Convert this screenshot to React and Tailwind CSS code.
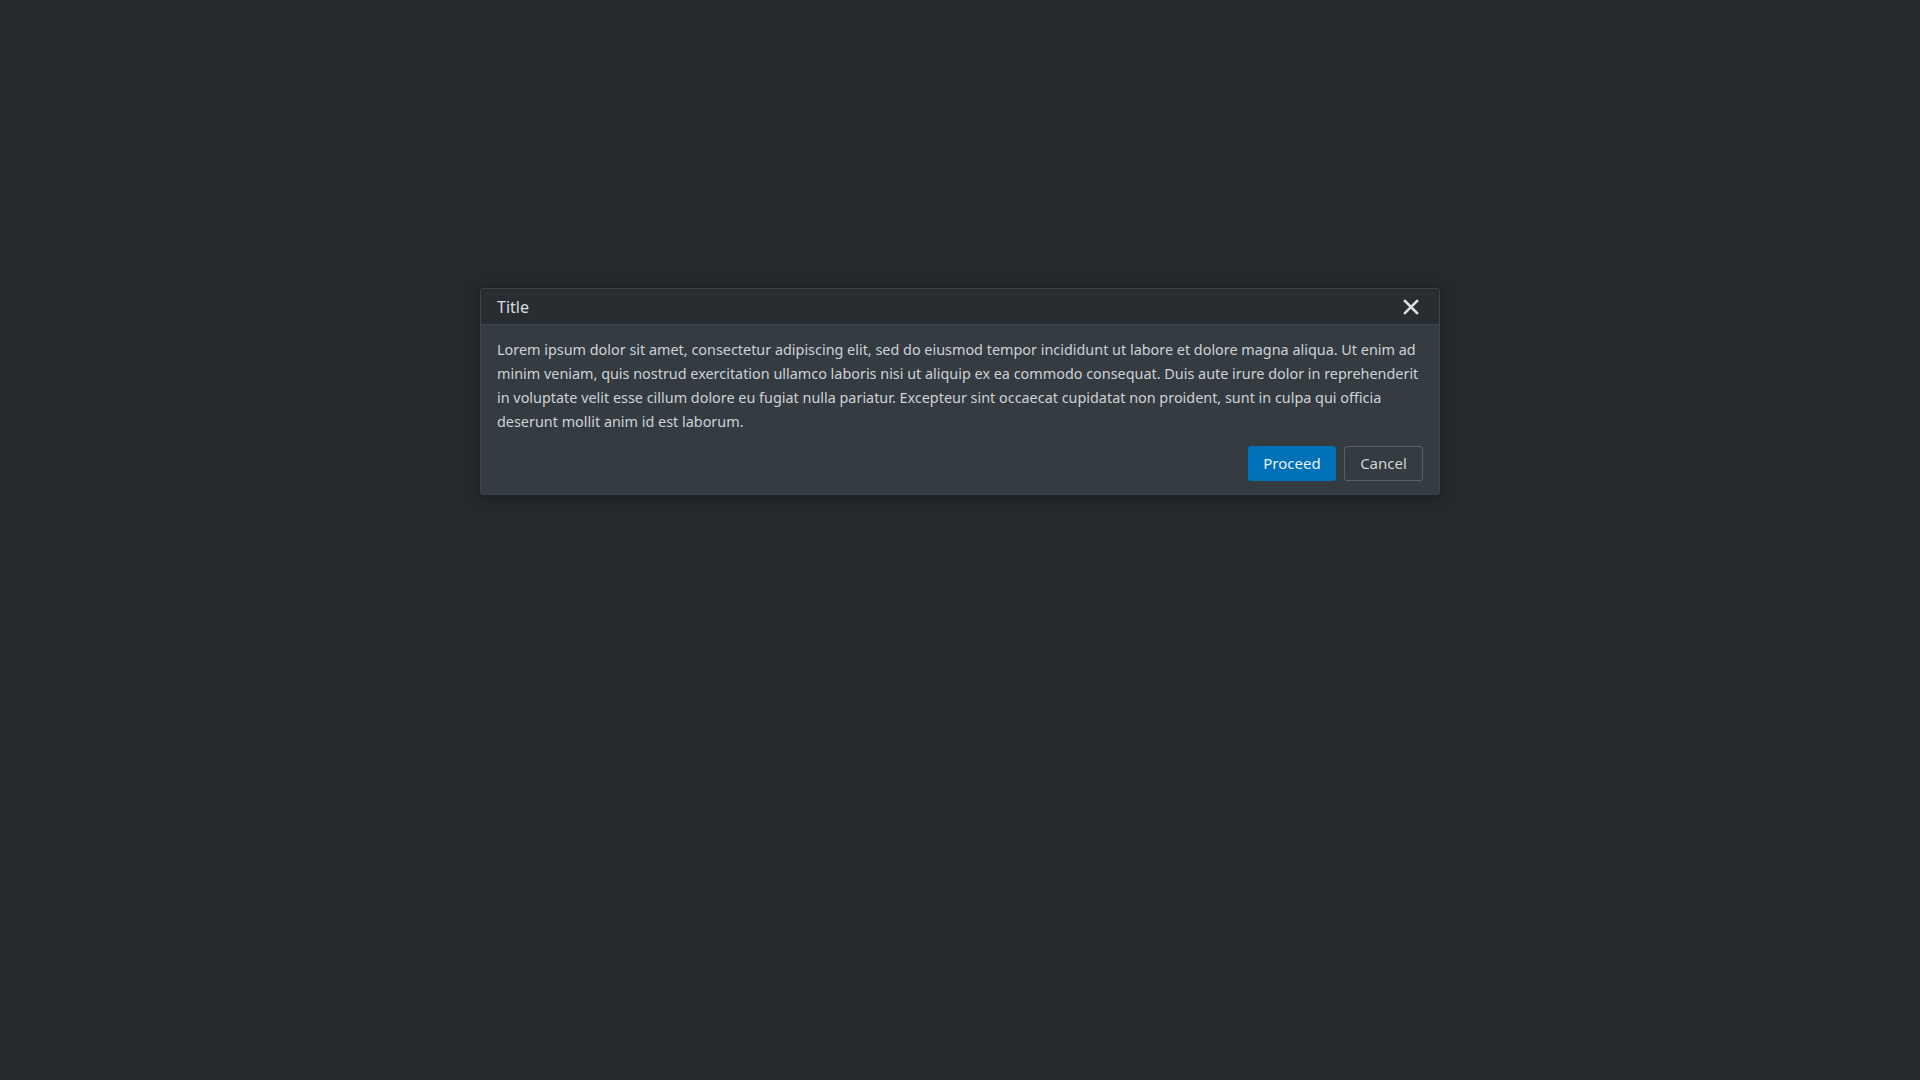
import { useState } from 'react';

const App = () => {
  const [open, setOpen] = useState(true);

  return (
    <div className="min-h-screen w-full bg-[#23292d] font-['Noto_Sans',sans-serif] pt-[288px]">
      {open && (
        <div className="mx-auto w-[960px] rounded-[3px] border border-[#3d4449] bg-[#343b41] shadow-[0_2px_12px_rgba(0,0,0,0.35)] overflow-hidden">
          {/* Header */}
          <div className="h-[36px] flex items-center justify-between pl-4 pr-[18px] bg-[#272d31] border-b border-[#3d4449]">
            <span className="text-[16px] text-[#d8dcdf]">Title</span>
            <button
              type="button"
              onClick={() => setOpen(false)}
              className="w-5 h-5 flex items-center justify-center text-[#d8dcdf]"
            >
              <svg width="16" height="16" viewBox="0 0 16 16" fill="none">
                <path d="M2 2L14 14M14 2L2 14" stroke="currentColor" strokeWidth="2.6" strokeLinecap="square" />
              </svg>
            </button>
          </div>

          {/* Body */}
          <div className="px-4 pt-[13px] pb-[13px]">
            <p className="text-[14.4px] leading-[24px] text-[#ced3d7]">
              Lorem ipsum dolor sit amet, consectetur adipiscing elit, sed do eiusmod tempor incididunt ut labore et
              dolore magna aliqua. Ut enim ad minim veniam, quis nostrud exercitation ullamco laboris nisi ut aliquip
              ex ea commodo consequat. Duis aute irure dolor in reprehenderit in voluptate velit esse cillum dolore eu
              fugiat nulla pariatur. Excepteur sint occaecat cupidatat non proident, sunt in culpa qui officia deserunt
              mollit anim id est laborum.
            </p>
            <div className="mt-[12px] flex justify-end gap-2">
              <button
                type="button"
                className="h-[35px] w-[88px] rounded-[3px] bg-[#0070b9] text-[15px] text-[#e8f1f8]"
              >
                Proceed
              </button>
              <button
                type="button"
                onClick={() => setOpen(false)}
                className="h-[35px] w-[79px] rounded-[3px] border border-[#5b6166] bg-transparent text-[15px] text-[#cfd3d6]"
              >
                Cancel
              </button>
            </div>
          </div>
        </div>
      )}
    </div>
  );
};

export default App;
